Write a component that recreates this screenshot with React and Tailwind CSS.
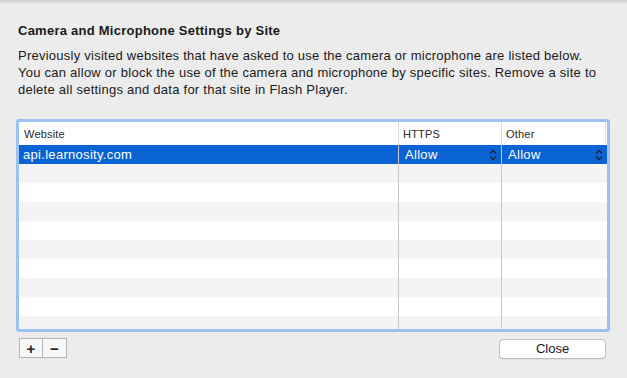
import React from 'react'

const ROW_COUNT = 9

function UpDown() {
  return (
    <svg width="8" height="12" viewBox="0 0 8 12" className="shrink-0">
      <path d="M1 4.5 L4 1.5 L7 4.5" fill="none" stroke="#14233a" strokeWidth="1.4" />
      <path d="M1 7.5 L4 10.5 L7 7.5" fill="none" stroke="#14233a" strokeWidth="1.4" />
    </svg>
  )
}

function Row({ index }) {
  const bg = index % 2 === 0 ? 'bg-[#f4f4f4]' : 'bg-white'
  return (
    <div className={`flex h-[19px] ${bg}`}>
      <div className="w-[380px] border-r border-[#c8c8c8]" />
      <div className="w-[103px] border-r border-[#c8c8c8]" />
      <div className="flex-1" />
    </div>
  )
}

export default function App() {
  return (
    <div
      className="w-[627px] h-[378px] bg-[#ececec] relative overflow-hidden text-[#1a1a1a]"
      style={{ fontFamily: '"Liberation Sans", Arial, sans-serif' }}
    >
      <div className="h-[4px] bg-gradient-to-b from-[#c9c9c9] to-[#ececec]" />

      <div className="pl-[18px] pr-[16px] pt-[19px]">
        <h1 className="text-[13px] leading-[16px] font-bold tracking-[0.25px]">
          Camera and Microphone Settings by Site
        </h1>
        <p className="mt-[8px] text-[13px] leading-[17px] tracking-[0.25px]">
          Previously visited websites that have asked to use the camera or microphone are listed below.
          <br />
          You can allow or block the use of the camera and microphone by specific sites. Remove a site to
          <br />
          delete all settings and data for that site in Flash Player.
        </p>
      </div>

      <div className="ml-[16px] mt-[21px] w-[594px] h-[213px] border-[3px] border-[#9cc2f3] rounded-[3px] bg-white overflow-hidden">
        <div className="flex h-[23px] bg-white text-[11px] text-[#2a2a2a] tracking-[0.2px]">
          <div className="w-[380px] border-r border-[#dcdcdc] flex items-center pl-[5px] pt-[1px]">Website</div>
          <div className="w-[103px] border-r border-[#dcdcdc] flex items-center pl-[4px] pt-[1px]">HTTPS</div>
          <div className="flex-1 flex items-center pl-[4px] pt-[1px] border-r border-[#dcdcdc] mr-[1px]">Other</div>
        </div>

        <div className="flex h-[19px] bg-[#0a63d3] text-white text-[13px] tracking-[0.3px]">
          <div className="w-[380px] border-r border-[#c8c8c8] flex items-center pl-[4px]">api.learnosity.com</div>
          <div className="w-[103px] border-r border-[#c8c8c8] flex items-center justify-between pl-[6px] pr-[4px]">
            <span>Allow</span>
            <UpDown />
          </div>
          <div className="flex-1 flex items-center justify-between pl-[6px] pr-[4px]">
            <span>Allow</span>
            <UpDown />
          </div>
        </div>

        {Array.from({ length: ROW_COUNT }).map((_, i) => (
          <Row key={i} index={i} />
        ))}
      </div>

      <div className="flex items-start justify-between pl-[19px] pr-[21px] mt-[6px]">
        <div className="flex h-[20px] border border-[#b4b4b4] bg-[#f7f7f7] text-[15px] font-bold text-[#222]">
          <button className="w-[23px] flex items-center justify-center border-r border-[#b4b4b4] leading-none">+</button>
          <button className="w-[23px] flex items-center justify-center leading-none">−</button>
        </div>
        <button className="mt-[1px] w-[107px] h-[20px] rounded-[4px] border border-[#bcbcbc] bg-white text-[13px] text-[#1a1a1a] flex items-center justify-center shadow-[0_0.5px_0.5px_rgba(0,0,0,0.08)]">
          Close
        </button>
      </div>
    </div>
  )
}
